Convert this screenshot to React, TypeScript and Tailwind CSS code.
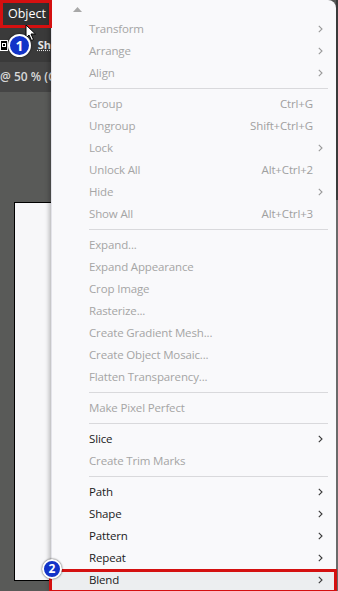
import React from 'react';

type Item =
  | { kind: 'sep' }
  | { kind: 'item'; label: string; shortcut?: string; sub?: boolean; enabled?: boolean };

const items: Item[] = [
  { kind: 'item', label: 'Transform', sub: true },
  { kind: 'item', label: 'Arrange', sub: true },
  { kind: 'item', label: 'Align', sub: true },
  { kind: 'sep' },
  { kind: 'item', label: 'Group', shortcut: 'Ctrl+G' },
  { kind: 'item', label: 'Ungroup', shortcut: 'Shift+Ctrl+G' },
  { kind: 'item', label: 'Lock', sub: true },
  { kind: 'item', label: 'Unlock All', shortcut: 'Alt+Ctrl+2' },
  { kind: 'item', label: 'Hide', sub: true },
  { kind: 'item', label: 'Show All', shortcut: 'Alt+Ctrl+3' },
  { kind: 'sep' },
  { kind: 'item', label: 'Expand...' },
  { kind: 'item', label: 'Expand Appearance' },
  { kind: 'item', label: 'Crop Image' },
  { kind: 'item', label: 'Rasterize...' },
  { kind: 'item', label: 'Create Gradient Mesh...' },
  { kind: 'item', label: 'Create Object Mosaic...' },
  { kind: 'item', label: 'Flatten Transparency...' },
  { kind: 'sep' },
  { kind: 'item', label: 'Make Pixel Perfect' },
  { kind: 'sep' },
  { kind: 'item', label: 'Slice', sub: true, enabled: true },
  { kind: 'item', label: 'Create Trim Marks' },
  { kind: 'sep' },
  { kind: 'item', label: 'Path', sub: true, enabled: true },
  { kind: 'item', label: 'Shape', sub: true, enabled: true },
  { kind: 'item', label: 'Pattern', sub: true, enabled: true },
  { kind: 'item', label: 'Repeat', sub: true, enabled: true },
  { kind: 'item', label: 'Blend', sub: true, enabled: true },
];

const Chevron = ({ dark }: { dark?: boolean }) => (
  <svg width="5" height="8" viewBox="0 0 5 8" className={dark ? 'text-[#3a3a3a]' : 'text-[#9a9a9a]'}>
    <path d="M0.8 0.8 L4 4 L0.8 7.2" fill="none" stroke="currentColor" strokeWidth="1.1" />
  </svg>
);

const Badge = ({ n, className }: { n: number; className: string }) => (
  <div
    className={`absolute flex items-center justify-center rounded-full bg-[#1233c8] border-2 border-white text-white font-bold shadow-[0_0_2px_rgba(0,0,0,0.8)] ${className}`}
  >
    {n}
  </div>
);

const Cursor = () => (
  <svg width="12" height="18" viewBox="0 0 12 18" className="absolute left-[25px] top-[24px]">
    <path d="M1 1 L1 14 L4 11 L6.5 16.5 L8.5 15.5 L6 10 L10.5 10 Z" fill="white" stroke="black" strokeWidth="1" strokeLinejoin="round" />
  </svg>
);

export default function App() {
  return (
    <div className="relative w-[338px] h-[591px] overflow-hidden flex bg-[#595a58] font-['Open_Sans','Noto_Sans',sans-serif]">
      {/* app behind the menu */}
      <div className="w-[51px] flex flex-col shrink-0">
        <div className="h-[28px] bg-[#323232] flex items-center pl-[8px] text-[12.5px] text-white">Object</div>
        <div className="h-[34px] bg-[#3a3a3a] flex items-center">
          <div className="w-[10px] h-[11px] bg-black border border-white flex items-center justify-center">
            <div className="w-[4px] h-[4px] border border-white" />
          </div>
          <span className="ml-[30px] text-[11px] font-bold text-[#e8e8e8] underline decoration-dotted">Sh</span>
        </div>
        <div className="h-[30px] bg-[#454545] flex items-center text-[12px] font-semibold text-[#d8d8d8] whitespace-nowrap">
          @ 50 % (CMYK
        </div>
        <div className="flex-1 pt-[110px] pl-[14px]">
          <div className="h-[379px] bg-[#f7f7f9] border-l border-t border-b border-black" />
        </div>
      </div>

      {/* Object menu */}
      <div className="w-[285px] shrink-0 bg-[#f9f9fb] rounded-tr-[8px] border-l border-[#e4e4ea] shadow-[-2px_0_4px_rgba(0,0,0,0.25)] flex flex-col text-[11.5px] tracking-[-0.15px]">
        <div className="h-[18px] flex items-center pl-[21px]">
          <svg width="9" height="5" viewBox="0 0 9 5">
            <path d="M0 5 L4.5 0 L9 5 Z" fill="#a8a8a8" />
          </svg>
        </div>
        {items.map((it, i) =>
          it.kind === 'sep' ? (
            <div key={i} className="h-[9px] flex items-center pl-[37px] pr-[8px]">
              <div className="h-px w-full bg-[#d9d9dc]" />
            </div>
          ) : (
            <div
              key={i}
              className={`h-[22px] flex items-center pl-[37px] ${it.label === 'Blend' ? 'bg-[#eceef0]' : ''}`}
            >
              <span className={`flex-1 whitespace-nowrap ${it.enabled ? 'text-[#1b1b1b]' : 'text-[#a5a5a5]'}`}>
                {it.label}
              </span>
              {it.shortcut && <span className="text-[#a0a0a0] whitespace-nowrap">{it.shortcut}</span>}
              <div className="w-[23px] pl-[5px] flex items-center">
                {it.sub && <Chevron dark={it.enabled} />}
              </div>
            </div>
          )
        )}
      </div>
      <div className="flex-1 flex flex-col">
        <div className="h-[200px] bg-[#3a3a3a]" />
        <div className="flex-1 bg-[#6a6a6a]" />
      </div>

      {/* annotations */}
      <div className="absolute left-0 top-0 w-[52px] h-[28px] border-[3px] border-[#d41010] pointer-events-none" />
      <Cursor />
      <Badge n={1} className="left-[8px] top-[34px] w-[23px] h-[23px] text-[14px]" />
      <div className="absolute left-[49px] top-[569px] w-[288px] h-[24px] border-[3px] border-[#d41010] pointer-events-none" />
      <Badge n={2} className="left-[42px] top-[559px] w-[20px] h-[20px] text-[12px]" />
    </div>
  );
}
